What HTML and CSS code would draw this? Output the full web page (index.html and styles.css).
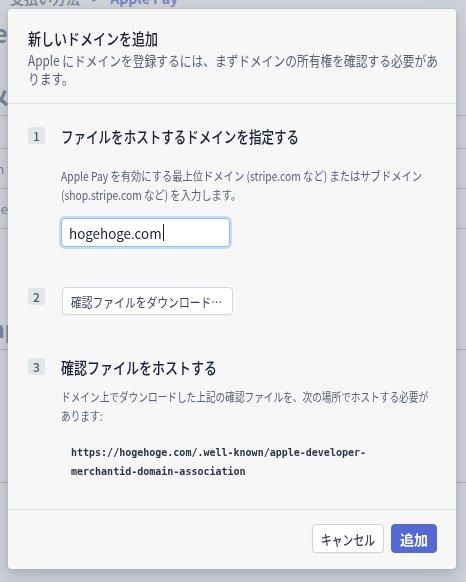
FILE: index.html
```html
<!DOCTYPE html>
<html lang="ja">
<head>
<meta charset="utf-8">
<title>新しいドメインを追加</title>
<link rel="stylesheet" href="styles.css">
</head>
<body>
<div class="page">
  <div class="crumbs">支払い方法 <span class="sep">&gt;</span> <span class="crumb-cur">Apple Pay</span></div>
  <h1 class="page-title">Apple Pay</h1>
  <h2 class="page-sec">ドメイン</h2>
  <div class="table">
    <div class="row row-head">ドメイン</div>
    <div class="row">stripe.com fa</div>
    <div class="row">shop.stripe.com cl</div>
  </div>
  <h2 class="page-sec page-sec-2">Example</h2>
  <div class="table table-2">
    <div class="row row-tall">&nbsp;</div>
  </div>
</div>

<div class="overlay">
  <div class="modal">
    <header class="modal-head">
      <h1 class="modal-title">新しいドメインを追加</h1>
      <p class="modal-sub">Apple にドメインを登録するには、まずドメインの所有権を確認する必要があ<br>ります。</p>
    </header>

    <div class="modal-body">
      <section class="step step-1">
        <div class="step-head">
          <span class="badge">1</span>
          <h2 class="step-title step-title-1">ファイルをホストするドメインを指定する</h2>
        </div>
        <div class="step-content">
          <p class="desc desc-1">Apple Pay を有効にする最上位ドメイン (stripe.com など) またはサブドメイン<br>(shop.stripe.com など) を入力します。</p>
          <div class="field"><span class="field-text">hogehoge.com</span><span class="caret"></span></div>
        </div>
      </section>

      <section class="step step-2">
        <div class="step-head">
          <span class="badge">2</span>
          <button class="btn btn-download" type="button"><span class="btn-label">確認ファイルをダウンロード…</span></button>
        </div>
      </section>

      <section class="step step-3">
        <div class="step-head">
          <span class="badge">3</span>
          <h2 class="step-title step-title-3">確認ファイルをホストする</h2>
        </div>
        <div class="step-content">
          <p class="desc desc-3">ドメイン上でダウンロードした上記の確認ファイルを、次の場所でホストする必要が<br>あります:</p>
          <pre class="code">https://hogehoge.com/.well-known/apple-developer-
merchantid-domain-association</pre>
        </div>
      </section>
    </div>

    <footer class="modal-foot">
      <button class="btn btn-cancel" type="button"><span class="btn-label">キャンセル</span></button>
      <button class="btn btn-primary" type="button">追加</button>
    </footer>
  </div>
</div>
</body>
</html>
```

FILE: styles.css
```css
* {
  box-sizing: border-box;
}

html, body {
  margin: 0;
  padding: 0;
}

body {
  width: 466px;
  height: 582px;
  overflow: hidden;
  background: #ffffff;
  font-family: "Noto Sans CJK JP", "Noto Sans", sans-serif;
  color: #3c4257;
}

/* ---------- background page ---------- */
.page {
  color: #7d8594;
}

.crumbs {
  margin-top: -11px;
  padding-left: 10px;
  font-size: 14px;
  line-height: 18px;
  font-weight: 500;
}

.crumbs .sep {
  margin: 0 8px;
}

.crumb-cur {
  color: #7b87d8;
  font-weight: 700;
}

.page-title {
  margin: 12px 0 0 -60px;
  font-size: 24px;
  line-height: 28px;
  font-weight: 700;
}

.page-sec {
  margin: 37px 0 0 -34px;
  font-size: 22px;
  line-height: 26px;
  font-weight: 700;
}

.table {
  margin-top: 5px;
  border-top: 1px solid #c9ced6;
}

.row {
  height: 40px;
  border-bottom: 1px solid #c9ced6;
  font-size: 13px;
  line-height: 40px;
  text-indent: -60px;
}

.row-head {
  height: 33px;
  line-height: 33px;
}

.page-sec-2 {
  margin: 86px 0 0 -54px;
}

.table-2 {
  margin-top: 8px;
}

.row-tall {
  height: 133px;
}

/* ---------- overlay + modal ---------- */
.overlay {
  position: fixed;
  inset: 0;
  background: rgba(119, 130, 147, 0.36);
  display: flex;
  align-items: flex-start;
  padding: 9px 10px 13px 8px;
}

.modal {
  width: 448px;
  height: 560px;
  background: #f7f7f7;
  border-radius: 4px;
  display: flex;
  flex-direction: column;
  box-shadow: 0 0 0 1px rgba(136, 152, 170, 0.12),
              0 4px 10px rgba(60, 66, 87, 0.18),
              0 12px 30px rgba(60, 66, 87, 0.12);
  overflow: hidden;
}

/* Reference font has narrow kana; condense the CJK runs to the same measure */
.modal-title,
.modal-sub,
.step-title,
.desc {
  transform-origin: 0 0;
  white-space: nowrap;
}

.modal-head {
  padding: 19px 20px 16px;
  border-bottom: 1px solid #e1e5ea;
}

.modal-title {
  margin: 0;
  font-size: 16px;
  line-height: 20px;
  font-weight: 500;
  color: #1a1f36;
  transform: scaleX(0.8125);
}

.modal-sub {
  margin: 3px 0 0;
  font-size: 14px;
  line-height: 18px;
  color: #586073;
  transform: scaleX(0.839);
}

.modal-body {
  flex: 1;
  padding: 22px 20px 0;
}

.step-head {
  display: flex;
  align-items: flex-start;
  gap: 16px;
}

.badge {
  flex: none;
  width: 17px;
  height: 17px;
  margin-top: 1px;
  border-radius: 3px;
  background: #e1e7e8;
  color: #525a6c;
  font-size: 12px;
  line-height: 17px;
  text-align: center;
  font-weight: 500;
}

.step-title {
  margin: 0;
  font-size: 16px;
  line-height: 20px;
  font-weight: 500;
  color: #1a1f36;
}

.step-title-1 {
  transform: scaleX(0.783);
}

.step-title-3 {
  transform: scaleX(0.8125);
}

.step-content {
  padding-left: 33px;
}

.desc {
  margin: 0;
  font-size: 12px;
  line-height: 19px;
  color: #586073;
}

.desc-1 {
  margin-top: 20px;
  transform: scaleX(0.857);
}

.desc-3 {
  margin-top: 10px;
  transform: scaleX(0.805);
}

.field {
  margin-top: 14px;
  width: 169px;
  height: 29px;
  display: flex;
  align-items: center;
  padding-left: 7px;
  background: #ffffff;
  border: 1px solid #8fbfe6;
  border-radius: 4px;
  box-shadow: 0 0 0 2px #c3ddf2;
  font-size: 13.4px;
  color: #1a1f36;
}

.caret {
  display: inline-block;
  width: 1px;
  height: 17px;
  margin-left: 1px;
  background: #1a1f36;
}

.step-2 {
  margin-top: 40px;
}

.step-3 {
  margin-top: 42px;
}

.btn {
  font-family: inherit;
  border-radius: 4px;
  cursor: pointer;
  white-space: nowrap;
  overflow: visible;
}

.btn-label {
  display: inline-block;
}

.btn-download {
  height: 28px;
  width: 171px;
  padding: 0 8px;
  margin-left: 1px;
  background: #ffffff;
  border: 1px solid #d5d9df;
  box-shadow: 0 1px 1px rgba(0, 0, 0, 0.04);
  font-size: 13px;
  color: #3c4257;
  text-align: left;
}

.btn-download .btn-label {
  transform: scaleX(0.83);
  transform-origin: 0 50%;
}

.code {
  margin: 18px 0 0;
  padding-left: 10px;
  font-family: "DejaVu Sans Mono", "Liberation Mono", monospace;
  font-size: 10px;
  line-height: 19px;
  color: #2e3448;
  font-weight: 600;
}

.modal-foot {
  display: flex;
  justify-content: flex-end;
  gap: 7px;
  padding: 14px 19px 16px;
  border-top: 1px solid #e1e5ea;
}

.btn-cancel {
  height: 29px;
  width: 72px;
  padding: 0;
  background: #ffffff;
  border: 1px solid #d0d4da;
  box-shadow: 0 1px 1px rgba(0, 0, 0, 0.04);
  font-size: 14px;
  font-weight: 500;
  color: #3c4257;
  text-align: center;
}

.btn-cancel .btn-label {
  transform: scaleX(0.77);
  transform-origin: 50% 50%;
}

.btn-primary {
  height: 29px;
  width: 46px;
  padding: 0;
  background: #5469d4;
  border: 1px solid #5469d4;
  font-size: 14px;
  font-weight: 700;
  color: #ffffff;
}
```
